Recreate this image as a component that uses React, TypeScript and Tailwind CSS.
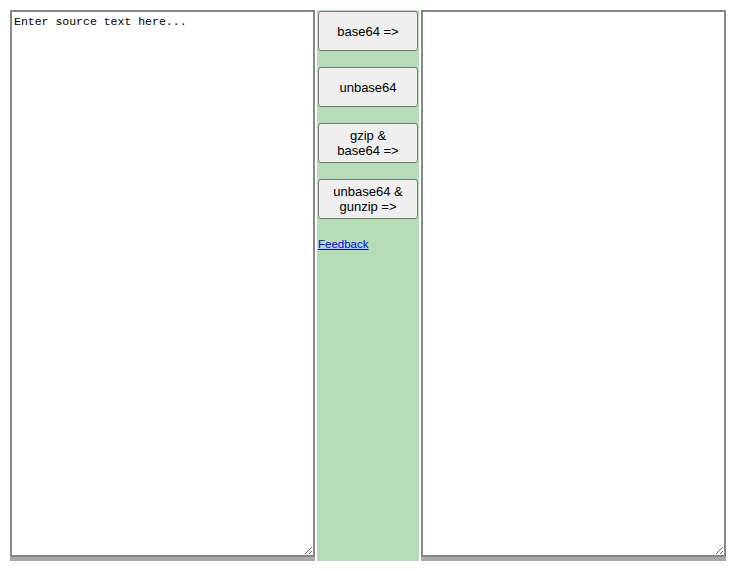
const buttons = [
  ["base64 =>"],
  ["unbase64"],
  ["gzip &", "base64 =>"],
  ["unbase64 &", "gunzip =>"],
];

const App = () => {
  return (
    <div className="bg-white w-[736px] h-[571px] p-[10px] font-['Liberation_Sans',Arial,sans-serif]">
      <div className="flex gap-[2px]">
        {/* Source */}
        <div className="w-[305px] bg-[#a9a9a9] pb-[4px] flex">
          <textarea
            className="w-[305px] h-[547px] bg-white border-2 border-[#878787] px-[2px] py-[3px] resize-y outline-none font-['Liberation_Mono',monospace] text-[11.5px] leading-[14px] text-black placeholder:text-black"
            placeholder="Enter source text here..."
          ></textarea>
        </div>

        {/* Actions */}
        <div className="w-[102px] bg-[#b6dcb5] pt-[1px] px-[1px] flex flex-col">
          {buttons.map((lines, i) => (
            <button
              key={i}
              className="w-[100px] h-[40px] mb-[16px] bg-[#efefef] border border-[#767676] rounded-[3px] text-[13px] leading-[15px] text-black flex flex-col items-center justify-center"
            >
              {lines.map((l) => (
                <span key={l}>{l}</span>
              ))}
            </button>
          ))}
          <a
            href="#"
            className="mt-[2px] text-[11.5px] leading-[14px] text-[#0000ee] underline self-start"
          >
            Feedback
          </a>
        </div>

        {/* Result */}
        <div className="w-[305px] bg-[#a9a9a9] pb-[4px] flex">
          <textarea className="w-[305px] h-[547px] bg-white border-2 border-[#878787] px-[2px] py-[3px] resize-y outline-none font-['Liberation_Mono',monospace] text-[11.5px] leading-[14px] text-black"></textarea>
        </div>
      </div>
    </div>
  );
};

export default App;
